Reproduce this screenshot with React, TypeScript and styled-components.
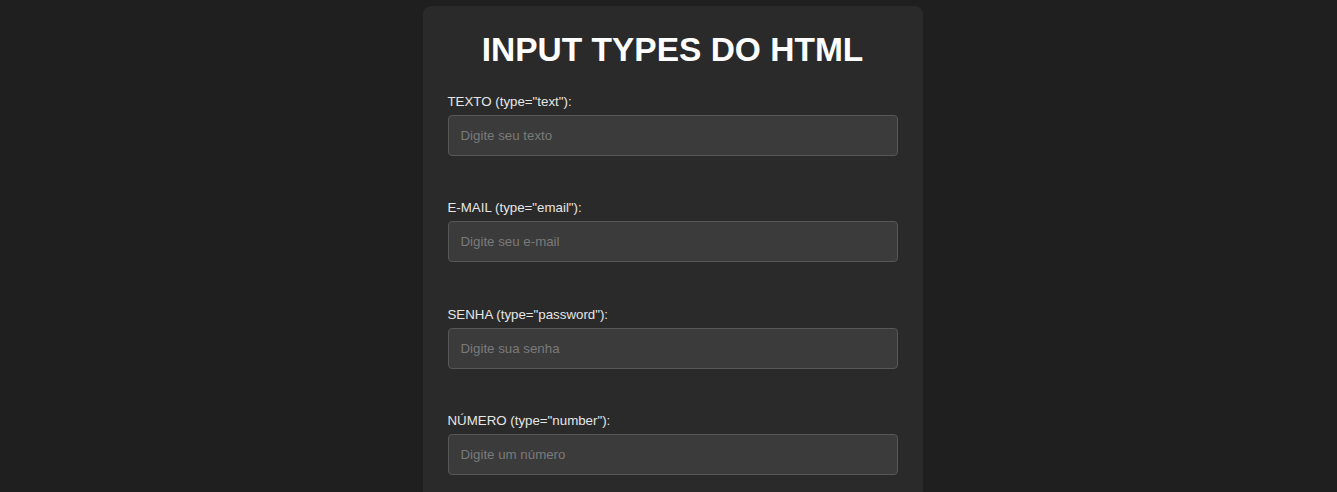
import styled, { createGlobalStyle } from 'styled-components'

const GlobalStyle = createGlobalStyle`
    html, body {
        margin: 0;
        padding: 0;
        background: #1f1f1f;
        font-family: "Liberation Sans", Arial, sans-serif;
    }
`

const Page = styled.div`
    padding: 6px 0 0 8px;
`

const Card = styled.div`
    width: 500px;
    box-sizing: border-box;
    margin: 0 auto;
    padding: 25px 25px 30px;
    background: #2a2a2a;
    border-radius: 8px;
    color: #ddd;
`

const Title = styled.h1`
    margin: 0 0 25px;
    font-size: 33.5px;
    font-weight: bold;
    text-align: center;
    color: #fff;
`

const Form = styled.form`
    display: flex;
    flex-direction: column;
    gap: 44.33px;
`

const Field = styled.div`
    display: flex;
    flex-direction: column;
`

const Label = styled.label`
    font-size: 13.3px;
    line-height: 16px;
    margin-bottom: 5px;
    color: #e6e6e6;
`

const Input = styled.input`
    box-sizing: border-box;
    width: 100%;
    height: 41px;
    padding: 0 12px;
    font-family: inherit;
    font-size: 13.3px;
    color: #eee;
    background: #3b3b3b;
    border: 1px solid #575757;
    border-radius: 4px;
    outline: none;

    &::placeholder {
        color: #7a7a7a;
    }
`

const fields = [
    { label: 'TEXTO (type="text"):', type: 'text', placeholder: 'Digite seu texto' },
    { label: 'E-MAIL (type="email"):', type: 'email', placeholder: 'Digite seu e-mail' },
    { label: 'SENHA (type="password"):', type: 'password', placeholder: 'Digite sua senha' },
    { label: 'NÚMERO (type="number"):', type: 'text', placeholder: 'Digite um número' },
]

const App = () => (
    <>
        <GlobalStyle />
        <Page>
            <Card>
                <Title>INPUT TYPES DO HTML</Title>
                <Form>
                    {fields.map((f) => (
                        <Field key={f.label}>
                            <Label>{f.label}</Label>
                            <Input type={f.type} placeholder={f.placeholder} />
                        </Field>
                    ))}
                </Form>
            </Card>
        </Page>
    </>
)

export default App
